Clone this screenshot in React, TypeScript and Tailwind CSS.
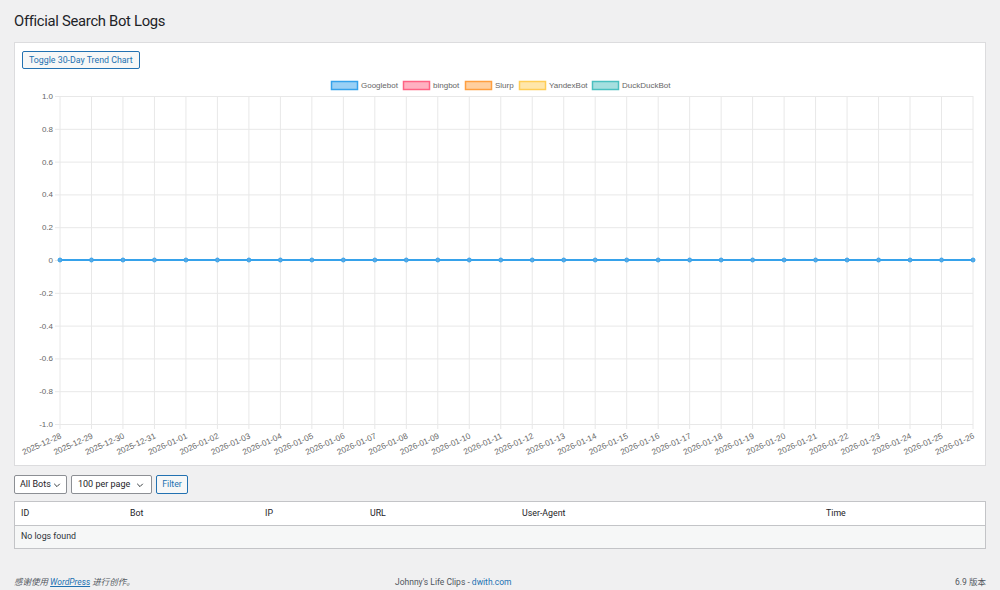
import React from "react";

const dates: string[] = (() => {
  const out: string[] = [];
  const d = new Date(Date.UTC(2025, 11, 28));
  for (let i = 0; i < 30; i++) {
    const y = d.getUTCFullYear();
    const m = String(d.getUTCMonth() + 1).padStart(2, "0");
    const day = String(d.getUTCDate()).padStart(2, "0");
    out.push(`${y}-${m}-${day}`);
    d.setUTCDate(d.getUTCDate() + 1);
  }
  return out;
})();

const legend = [
  { name: "Googlebot", stroke: "#36a2eb", fill: "rgba(54,162,235,0.5)", x: 331 },
  { name: "bingbot", stroke: "#ff6384", fill: "rgba(255,99,132,0.5)", x: 403 },
  { name: "Slurp", stroke: "#ff9f40", fill: "rgba(255,159,64,0.5)", x: 465 },
  { name: "YandexBot", stroke: "#ffcd56", fill: "rgba(255,205,86,0.5)", x: 519 },
  { name: "DuckDuckBot", stroke: "#4bc0c0", fill: "rgba(75,192,192,0.5)", x: 592 },
];

const yTicks = ["1.0", "0.8", "0.6", "0.4", "0.2", "0", "-0.2", "-0.4", "-0.6", "-0.8", "-1.0"];

function Chart() {
  const left = 60;
  const right = 973;
  const top = 96;
  const bottom = 424;
  const xs = dates.map((_, i) => left + (i * (right - left)) / 29);
  const ys = yTicks.map((_, i) => top + (i * (bottom - top)) / 10);
  const font = "'Liberation Sans', Arial, sans-serif";
  return (
    <svg width={971} height={391} className="block mt-[5px]">
      <g transform="translate(-15,-74)">
        {legend.map((l) => (
          <g key={l.name}>
            <rect x={l.x + 0.5} y={81.5} width={26} height={8} fill={l.fill} stroke={l.stroke} strokeWidth={1.5} />
            <text x={l.x + 30} y={88.3} fontSize={8} fill="#666" fontFamily={font}>
              {l.name}
            </text>
          </g>
        ))}
        {ys.map((y, i) => (
          <line key={"h" + i} x1={55} x2={right} y1={y + 0.5} y2={y + 0.5} stroke="#e8e8e8" strokeWidth={1} />
        ))}
        {xs.map((x, i) => (
          <line key={"v" + i} x1={x} x2={x} y1={top} y2={bottom + 5} stroke="#e8e8e8" strokeWidth={1} />
        ))}
        {yTicks.map((t, i) => (
          <text key={"yl" + i} x={53} y={ys[i] + 3} fontSize={8} fill="#666" textAnchor="end" fontFamily={font}>
            {t}
          </text>
        ))}
        {dates.map((d, i) => (
          <text
            key={"xl" + i}
            x={xs[i] + 2}
            y={438}
            fontSize={8.2}
            fill="#666"
            textAnchor="end"
            fontFamily={font}
            transform={`rotate(-24 ${xs[i] + 2} 438)`}
          >
            {d}
          </text>
        ))}
        <line x1={left} x2={right} y1={260} y2={260} stroke="#36a2eb" strokeWidth={2} />
        {xs.map((x, i) => (
          <circle key={"p" + i} cx={x} cy={260} r={2} fill="#5aa9e2" stroke="#36a2eb" strokeWidth={1} />
        ))}
      </g>
    </svg>
  );
}

function Chevron() {
  return (
    <svg width="8" height="8" viewBox="0 0 10 10" className="block">
      <path d="M1.5 3.5 L5 7 L8.5 3.5" fill="none" stroke="#1d2327" strokeWidth="1.1" />
    </svg>
  );
}

export default function App() {
  return (
    <div className="w-[1000px] min-h-[590px] bg-[#f0f0f1] font-['Roboto',sans-serif] text-[#1d2327]">
      <div className="px-[14px]">
        <h1 className="pt-[12px] text-[14.8px] leading-[18px] font-normal tracking-[-0.3px] text-[#1d2327]">
          Official Search Bot Logs
        </h1>
        <div className="mt-[12px] border border-[#dcdcde] bg-white">
          <div className="flex px-[7px] pt-[8px]">
            <button className="block h-[18px] px-[6px] rounded-[2px] border border-[#2271b1] bg-[#f6f7f7] text-[#2271b1] text-[8.8px] leading-[16px]">
              Toggle 30-Day Trend Chart
            </button>
          </div>
          <Chart />
        </div>
        <div className="mt-[9px] flex items-center gap-[4px]">
          <div className="h-[19px] w-[53px] rounded-[2px] border border-[#8c8f94] bg-white flex items-center justify-between pl-[5px] pr-[5px] text-[9px]">
            <span>All Bots</span>
            <Chevron />
          </div>
          <div className="h-[19px] w-[81px] rounded-[2px] border border-[#8c8f94] bg-white flex items-center justify-between pl-[6px] pr-[7px] text-[9px]">
            <span>100 per page</span>
            <Chevron />
          </div>
          <button className="block h-[19px] w-[32px] rounded-[2px] border border-[#2271b1] bg-[#f6f7f7] text-[#2271b1] text-[8.8px]">
            Filter
          </button>
        </div>
        <div className="mt-[7px] border border-[#c3c4c7] bg-white text-[8.8px]">
          <div className="grid grid-cols-[109px_135px_105px_152px_304px_1fr] h-[24px] items-center pl-[6px] border-b border-[#c3c4c7]">
            <span>ID</span>
            <span>Bot</span>
            <span>IP</span>
            <span>URL</span>
            <span>User-Agent</span>
            <span>Time</span>
          </div>
          <div className="h-[22px] flex items-center pl-[6px] bg-[#f6f7f7] text-[#2c3338]">No logs found</div>
        </div>
        <div className="mt-[27px] flex items-center text-[8.5px] text-[#50575e] leading-[12px]">
          <span className="w-[381px] italic font-['Roboto','Noto_Sans_CJK_SC',sans-serif]">
            感谢使用 <span className="text-[#2271b1] underline">WordPress</span> 进行创作。
          </span>
          <span>
            Johnny's Life Clips - <span className="text-[#2271b1]">dwith.com</span>
          </span>
          <span className="ml-auto font-['Roboto','Noto_Sans_CJK_SC',sans-serif]">6.9 版本</span>
        </div>
      </div>
    </div>
  );
}
